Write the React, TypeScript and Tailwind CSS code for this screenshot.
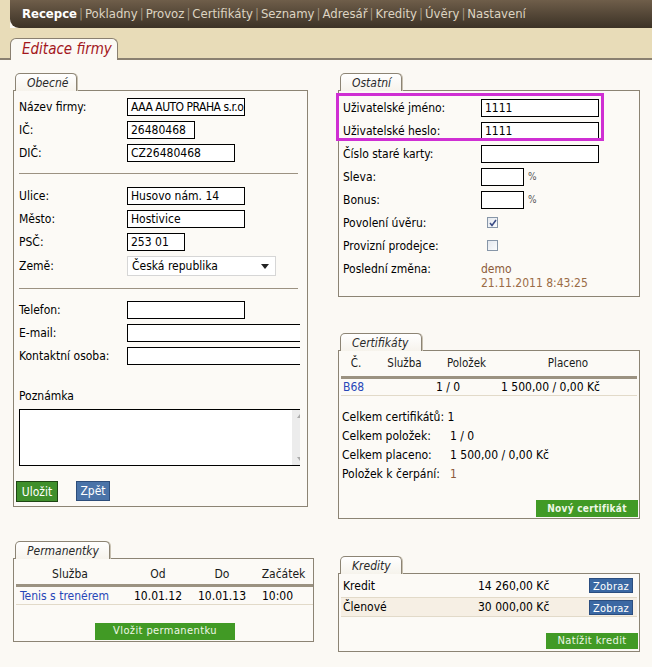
import type { ReactNode } from 'react'

const navItems = ['Pokladny', 'Provoz', 'Certifikáty', 'Seznamy', 'Adresář', 'Kredity', 'Úvěry', 'Nastavení']

function Panel({ title, tabW, className, children }: { title: string; tabW: string; className: string; children: ReactNode }) {
  return (
    <div className={className}>
      <div
        className={`relative z-10 ml-[2px] -mb-px flex h-[18px] items-center rounded-t-[5px] border border-b-0 border-[#8c8474] bg-gradient-to-b from-white to-[#f6f3ec] pl-[11px] text-[12px] italic text-[#2a2a2a] shadow-[1px_0_0_#c9c2b2] ${tabW}`}
      >
        {title}
      </div>
      <div className="border border-[#8c8474] bg-[#fcfaf6]">{children}</div>
    </div>
  )
}

function Field({ w, value, tight }: { w: string; value?: string; tight?: boolean }) {
  return (
    <div
      className={`h-[18px] shrink-0 overflow-hidden whitespace-nowrap border border-black bg-white pl-[3px] text-[12px] leading-[16px] text-black ${w} ${tight ? 'tracking-[-0.5px]' : ''}`}
    >
      {value}
    </div>
  )
}

function Row({ label, lw, children, h = 'h-[23px]' }: { label: string; lw: string; children?: ReactNode; h?: string }) {
  return (
    <div className={`flex items-center ${h}`}>
      <div className={`shrink-0 ${lw}`}>{label}</div>
      {children}
    </div>
  )
}

function Check({ on }: { on?: boolean }) {
  return (
    <div className="ml-[6px] flex h-[11px] w-[11px] items-center justify-center border border-[#8796a8] bg-gradient-to-br from-[#e4e8ee] to-[#fbfcfd]">
      {on && (
        <svg width="8" height="8" viewBox="0 0 8 8">
          <path d="M1 4 L3 6.5 L7 1" stroke="#3b4c86" strokeWidth="1.6" fill="none" />
        </svg>
      )}
    </div>
  )
}

export default function App() {
  return (
    <div className="h-[667px] w-[652px] overflow-hidden bg-[#fbf9f4] font-['DejaVu_Sans_Condensed','DejaVu_Sans',sans-serif] text-[12px] text-black">
      {/* horní menu */}
      <div className="flex h-[28px]">
        <div className="w-[10px] bg-[#e8dcb8]" />
        <div className="flex flex-1 items-center rounded-bl-[9px] bg-gradient-to-b from-[#6f5e4a] to-[#3c3226] pl-[12px] text-[13px] text-[#ddd4c2]">
          <span className="font-bold text-white">Recepce</span>
          {navItems.map((item) => (
            <span key={item} className="flex items-center">
              <span className="mx-[2px] text-[#a3947f]">|</span>
              {item}
            </span>
          ))}
        </div>
      </div>

      {/* pás se záložkou */}
      <div className="flex h-[32px] items-end border-b-2 border-[#8a8070] bg-[#e8dcb8] pl-[10px]">
        <div className="-mb-[2px] flex h-[22px] w-[108px] items-center rounded-t-[6px] border border-b-0 border-[#8a8070] bg-[#fbf9f4] pl-[11px] text-[15px] italic text-[#a3171c]">
          Editace firmy
        </div>
      </div>

      <div className="flex gap-[24px] pl-[13px] pt-[13px]">
        {/* levý sloupec */}
        <div className="w-[301px]">
          <Panel title="Obecné" tabW="w-[62px]" className="w-[295px]">
            <div className="w-[286px] overflow-hidden pb-[4px] pt-[4px]">
              <div className="pl-[5px]">
                <Row label="Název firmy:" lw="w-[108px]">
                  <Field w="w-[118px]" value="AAA AUTO PRAHA s.r.o." tight />
                </Row>
                <Row label="IČ:" lw="w-[108px]">
                  <Field w="w-[68px]" value="26480468" />
                </Row>
                <Row label="DIČ:" lw="w-[108px]">
                  <Field w="w-[108px]" value="CZ26480468" />
                </Row>
                <div className="mb-[10px] mt-[9px] h-px w-[279px] bg-[#9c9282]" />
                <Row label="Ulice:" lw="w-[108px]">
                  <Field w="w-[118px]" value="Husovo nám. 14" />
                </Row>
                <Row label="Město:" lw="w-[108px]">
                  <Field w="w-[118px]" value="Hostivice" />
                </Row>
                <Row label="PSČ:" lw="w-[108px]">
                  <Field w="w-[58px]" value="253 01" />
                </Row>
                <Row label="Země:" lw="w-[108px]" h="h-[26px]">
                  <div className="flex h-[20px] w-[149px] items-center justify-between border border-[#d6d6d6] bg-white pl-[4px] pr-[6px]">
                    <span>Česká republika</span>
                    <svg width="8" height="5" viewBox="0 0 8 5">
                      <path d="M0 0 H8 L4 5 Z" fill="#222" />
                    </svg>
                  </div>
                </Row>
                <div className="mb-[9px] mt-[9px] h-px w-[279px] bg-[#9c9282]" />
                <Row label="Telefon:" lw="w-[108px]">
                  <Field w="w-[118px]" />
                </Row>
                <Row label="E-mail:" lw="w-[108px]">
                  <Field w="w-[190px]" />
                </Row>
                <Row label="Kontaktní osoba:" lw="w-[108px]">
                  <Field w="w-[190px]" />
                </Row>
                <div className="mt-[20px] h-[18px] leading-[18px]">Poznámka</div>
                <div className="mt-[4px] flex h-[57px] w-[290px] border border-black bg-white">
                  <div className="flex-1" />
                  <div className="flex w-[16px] flex-col items-center justify-between bg-[#ececec] py-[4px]">
                    <svg width="6" height="4" viewBox="0 0 6 4">
                      <path d="M0 4 L3 0 L6 4 Z" fill="#aaa" />
                    </svg>
                    <svg width="6" height="4" viewBox="0 0 6 4">
                      <path d="M0 0 L6 0 L3 4 Z" fill="#aaa" />
                    </svg>
                  </div>
                </div>
              </div>
              <div className="mt-[15px] flex items-start gap-[18px] pl-[2px]">
                <button className="h-[21px] w-[42px] border border-[#1f4614] bg-[#3f8f2c] text-[12px] text-white">Uložit</button>
                <button className="h-[20px] w-[34px] border border-[#2d4d7a] bg-[#4a73a8] text-[12px] text-white">Zpět</button>
              </div>
            </div>
          </Panel>

          <Panel title="Permanentky" tabW="w-[95px]" className="mt-[34px] w-[301px]">
            <div className="flex h-[25px] items-center pt-[4px] text-[12px] text-[#1a1a1a]">
              <div className="w-[112px] text-center">Služba</div>
              <div className="w-[64px] text-center">Od</div>
              <div className="w-[64px] text-center">Do</div>
              <div className="w-[59px] text-center">Začátek</div>
            </div>
            <div className="ml-[2px] h-[3px] bg-[#9b9281]" />
            <div className="flex h-[17px] items-center">
              <div className="w-[112px] pl-[6px] text-[#2747b8]">Tenis s trenérem</div>
              <div className="w-[64px] text-center">10.01.12</div>
              <div className="w-[64px] text-center">10.01.13</div>
              <div className="w-[59px] pl-[8px]">10:00</div>
            </div>
            <div className="ml-[2px] h-px bg-[#e2dac9]" />
            <div className="pb-[1px] pl-[81px] pt-[16px]">
              <button className="h-[17px] w-[140px] bg-[#419a25] text-[11px] tracking-[0.4px] text-[#eef7e6]">
                Vložit permanentku
              </button>
            </div>
          </Panel>
        </div>

        {/* pravý sloupec */}
        <div className="w-[302px]">
          <Panel title="Ostatní" tabW="w-[62px]" className="w-[302px]">
            <div className="pb-[6px] pl-[4px] pt-[5px]">
              <div className="relative">
                <Row label="Uživatelské jméno:" lw="w-[138px]">
                  <Field w="w-[118px]" value="1111" />
                </Row>
                <Row label="Uživatelské heslo:" lw="w-[138px]">
                  <Field w="w-[118px]" value="1111" />
                </Row>
                <div className="absolute left-[-7px] top-[-3px] h-[48px] w-[268px] border-[3px] border-[#cf2fd3]" />
              </div>
              <Row label="Číslo staré karty:" lw="w-[138px]">
                <Field w="w-[118px]" />
              </Row>
              <Row label="Sleva:" lw="w-[138px]">
                <Field w="w-[43px]" />
                <span className="ml-[4px] text-[10px] text-[#555]">%</span>
              </Row>
              <Row label="Bonus:" lw="w-[138px]">
                <Field w="w-[43px]" />
                <span className="ml-[4px] text-[10px] text-[#555]">%</span>
              </Row>
              <Row label="Povolení úvěru:" lw="w-[138px]">
                <Check on />
              </Row>
              <Row label="Provizní prodejce:" lw="w-[138px]">
                <Check />
              </Row>
              <div className="flex pt-[5px] leading-[14px]">
                <div className="w-[138px]">Poslední změna:</div>
                <div className="text-[#8c5a3a]">
                  <div>demo</div>
                  <div className="text-[#9a6b45]">21.11.2011 8:43:25</div>
                </div>
              </div>
            </div>
          </Panel>

          <Panel title="Certifikáty" tabW="w-[82px]" className="mt-[36px] w-[302px]">
            <div className="flex h-[25px] items-center text-[11.5px] text-[#1a1a1a]">
              <div className="w-[34px] text-center">Č.</div>
              <div className="w-[63px] text-center">Služba</div>
              <div className="w-[61px] text-center">Položek</div>
              <div className="w-[142px] text-center">Placeno</div>
            </div>
            <div className="mx-[2px] h-[3px] bg-[#9b9281]" />
            <div className="flex h-[16px] items-center pl-[4px]">
              <div className="w-[93px] text-[#2747b8]">B68</div>
              <div className="w-[65px]">1 / 0</div>
              <div>1 500,00 / 0,00 Kč</div>
            </div>
            <div className="mx-[2px] h-px bg-[#e2dac9]" />
            <div className="mt-[11px] pl-[3px]">
              <div className="flex h-[19px] items-center">Celkem certifikátů: 1</div>
              <div className="flex h-[19px] items-center">
                <div className="w-[108px]">Celkem položek:</div>1 / 0
              </div>
              <div className="flex h-[19px] items-center">
                <div className="w-[108px]">Celkem placeno:</div>1 500,00 / 0,00 Kč
              </div>
              <div className="flex h-[19px] items-center">
                <div className="w-[108px]">Položek k čerpání:</div>
                <span className="text-[#8c5a3a]">1</span>
              </div>
            </div>
            <div className="flex justify-end pb-[1px] pr-[1px] pt-[17px]">
              <button className="h-[17px] w-[102px] bg-[#419a25] text-[10px] font-bold tracking-[0.3px] text-[#eef7e6]">
                Nový certifikát
              </button>
            </div>
          </Panel>

          <Panel title="Kredity" tabW="w-[62px]" className="mt-[37px] w-[302px]">
            <div className="flex h-[23px] items-center pl-[4px] pr-[6px]">
              <div className="w-[135px]">Kredit</div>
              <div>14 260,00 Kč</div>
              <button className="ml-auto h-[15px] w-[44px] border border-[#2b4e80] bg-[#3b68a3] text-[11px] tracking-[0.3px] text-white">Zobraz</button>
            </div>
            <div className="mx-[2px] h-px bg-[#e2dac9]" />
            <div className="mx-[2px] flex h-[18px] items-center bg-[#f6efe4] pl-[2px] pr-[4px]">
              <div className="w-[135px]">Členové</div>
              <div>30 000,00 Kč</div>
              <button className="ml-auto h-[15px] w-[44px] border border-[#2b4e80] bg-[#3b68a3] text-[11px] tracking-[0.3px] text-white">Zobraz</button>
            </div>
            <div className="mx-[2px] h-px bg-[#e2dac9]" />
            <div className="flex justify-end pb-[2px] pr-[1px] pt-[16px]">
              <button className="h-[16px] w-[92px] bg-[#419a25] text-[11px] tracking-[0.4px] text-[#eef7e6]">
                Natížit kredit
              </button>
            </div>
          </Panel>
        </div>
      </div>
    </div>
  )
}
